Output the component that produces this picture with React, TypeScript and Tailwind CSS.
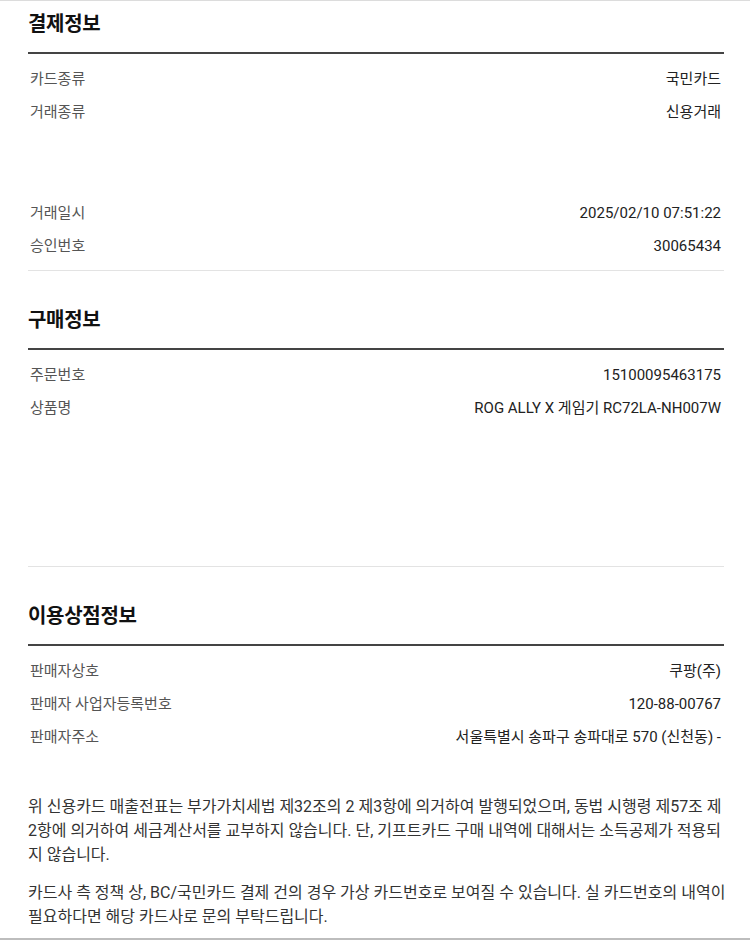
import React from "react";

type Row = { label: string; value: string } | null;

function Section({
  title,
  rows,
  blankAfter,
  showBottom = true,
  titleTop,
}: {
  title: string;
  rows: Row[];
  blankAfter: number;
  showBottom?: boolean;
  titleTop: string;
}) {
  return (
    <section>
      <div className={`${titleTop} pb-[13px] border-b-2 border-[#444]`}>
        <h2 className="text-[20px] leading-[30px] font-bold text-[#111] tracking-[-0.3px]">{title}</h2>
      </div>
      <div className="pt-[9px]">
        {rows.map((r, i) =>
          r ? (
            <div key={i} className="flex justify-between items-center h-[33px] pl-[2px] pr-[3px] text-[15px]">
              <span className="text-[#555]">{r.label}</span>
              <span className="text-[#222]">{r.value}</span>
            </div>
          ) : (
            <div key={i} className="h-[34px]" />
          )
        )}
      </div>
      <div style={{ height: blankAfter }} />
      {showBottom && <div className="h-px bg-[#e3e3e3]" />}
    </section>
  );
}

export default function App() {
  return (
    <div
      className="w-[750px] h-[940px] bg-white border-t border-[#dcdcdc] overflow-hidden flex flex-col"
      style={{ fontFamily: 'Roboto, "Noto Sans CJK KR", sans-serif' }}
    >
      <div className="flex-1 pl-[28px] pr-[26px]">
        <Section
          title="결제정보"
          titleTop="pt-[8px]"
          rows={[
            { label: "카드종류", value: "국민카드" },
            { label: "거래종류", value: "신용거래" },
            null,
            null,
            { label: "거래일시", value: "2025/02/10 07:51:22" },
            { label: "승인번호", value: "30065434" },
          ]}
          blankAfter={7}
        />
        <Section
          title="구매정보"
          titleTop="pt-[34px]"
          rows={[
            { label: "주문번호", value: "15100095463175" },
            { label: "상품명", value: "ROG ALLY X 게임기 RC72LA-NH007W" },
          ]}
          blankAfter={141}
        />
        <Section
          title="이용상점정보"
          titleTop="pt-[34px]"
          rows={[
            { label: "판매자상호", value: "쿠팡(주)" },
            { label: "판매자 사업자등록번호", value: "120-88-00767" },
            { label: "판매자주소", value: "서울특별시 송파구 송파대로 570 (신천동) -" },
          ]}
          blankAfter={0}
          showBottom={false}
        />
        <div className="pt-[41px] mr-[-6px] text-[16px] leading-[24px] text-[#333]">
          <p>
            위 신용카드 매출전표는 부가가치세법 제32조의 2 제3항에 의거하여 발행되었으며, 동법 시행령 제57조 제2항에 의거하여 세금계산서를 교부하지 않습니다. 단, 기프트카드 구매 내역에 대해서는 소득공제가 적용되지 않습니다.
          </p>
          <p className="mt-[14px]">
            카드사 측 정책 상, BC/국민카드 결제 건의 경우 가상 카드번호로 보여질 수 있습니다. 실 카드번호의 내역이 필요하다면 해당 카드사로 문의 부탁드립니다.
          </p>
        </div>
      </div>
      <div className="h-[2px] bg-[#bdbdbd]" />
    </div>
  );
}
